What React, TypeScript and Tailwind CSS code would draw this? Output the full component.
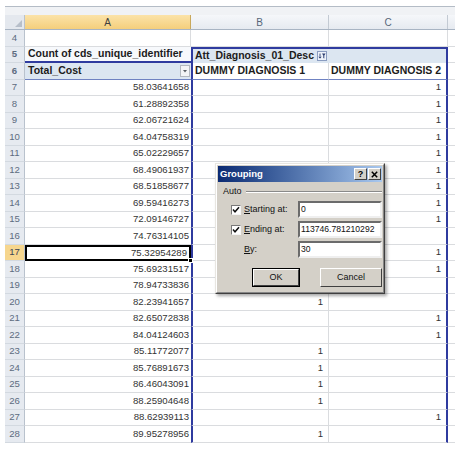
import React from 'react';

type DataRow = { n: number; a: string; b?: string; c?: string };

const dataRows: DataRow[] = [
  { n: 7, a: '58.03641658', c: '1' },
  { n: 8, a: '61.28892358', c: '1' },
  { n: 9, a: '62.06721624', c: '1' },
  { n: 10, a: '64.04758319', c: '1' },
  { n: 11, a: '65.02229657', c: '1' },
  { n: 12, a: '68.49061937', c: '1' },
  { n: 13, a: '68.51858677', c: '1' },
  { n: 14, a: '69.59416273', c: '1' },
  { n: 15, a: '72.09146727', c: '1' },
  { n: 16, a: '74.76314105' },
  { n: 17, a: '75.32954289', c: '1' },
  { n: 18, a: '75.69231517', c: '1' },
  { n: 19, a: '78.94733836' },
  { n: 20, a: '82.23941657', b: '1' },
  { n: 21, a: '82.65072838', c: '1' },
  { n: 22, a: '84.04124603', c: '1' },
  { n: 23, a: '85.11772077', b: '1' },
  { n: 24, a: '85.76891673', b: '1' },
  { n: 25, a: '86.46043091', b: '1' },
  { n: 26, a: '88.25904648', b: '1' },
  { n: 27, a: '88.62939113', c: '1' },
  { n: 28, a: '89.95278956', b: '1' },
];

const RowNum: React.FC<{ n: number; active?: boolean }> = ({ n, active }) => (
  <div
    className={`w-[20px] shrink-0 flex items-center justify-center border-r border-b border-r-[#b9c2cd] border-b-[#d3d9e0] text-[9.6px] ${
      active ? 'bg-[#f6d68e] text-[#3d4656]' : 'bg-[#e6eaf0] text-[#5d6c80]'
    }`}
  >
    {n}
  </div>
);

const FilterIcon = () => (
  <svg width="10" height="10" viewBox="0 0 10 10" className="shrink-0">
    <rect x="0.5" y="0.5" width="9" height="9" fill="#eef3fa" stroke="#8a9cc0" />
    <path d="M3 2.5v4.5M1.8 5.8L3 7.2L4.2 5.8" stroke="#2c3e70" strokeWidth="0.9" fill="none" />
    <path d="M5 2.6h3.6L7.3 4.6v3L6.3 7V4.6z" fill="#2c3e70" />
  </svg>
);

const DropIcon = () => (
  <svg width="10" height="12" viewBox="0 0 10 12" className="shrink-0">
    <rect x="0.5" y="0.5" width="9" height="11" fill="#f3f4f6" stroke="#b3b8bf" />
    <path d="M3 5h4L5 7.5z" fill="#5a5f66" />
  </svg>
);

const Check = () => (
  <div className="w-[10px] h-[10px] bg-white border border-t-[#7a7a7a] border-l-[#7a7a7a] border-r-[#f4f4f4] border-b-[#f4f4f4] flex items-center justify-center shrink-0">
    <svg width="8" height="8" viewBox="0 0 8 8">
      <path d="M1 3.6L3 5.8L7 1.2" stroke="#111" strokeWidth="1.5" fill="none" />
    </svg>
  </div>
);

const Field: React.FC<{ value: string }> = ({ value }) => (
  <div className="w-[84px] shrink-0 h-[17px] bg-white border-2 border-t-[#6b6b6b] border-l-[#6b6b6b] border-r-[#efefef] border-b-[#efefef] flex items-center pl-[1px] text-[8.6px] text-[#111] overflow-hidden whitespace-nowrap">
    {value}
  </div>
);

const GroupingDialog = () => (
  <div className="absolute left-[215px] top-[163px] w-[170px] h-[131px] bg-[#d4d0c8] border border-t-[#e8e6e1] border-l-[#e8e6e1] border-r-[#3f3f3f] border-b-[#3f3f3f] shadow-[2px_2px_3px_rgba(0,0,0,0.35)]">
    <div className="h-full border border-t-white border-l-white border-r-[#868686] border-b-[#868686] px-[1px] pt-[1px] flex flex-col">
      <div className="h-[16px] bg-linear-to-r from-[#0b2a72] to-[#a9c8ee] flex items-center justify-between pl-[2px] pr-[1px]">
        <span className="text-white font-bold text-[9.5px]">Grouping</span>
        <div className="flex gap-[1px]">
          <div className="w-[13px] h-[12px] bg-[#d4d0c8] border border-t-white border-l-white border-r-[#404040] border-b-[#404040] flex items-center justify-center text-[9px] font-bold leading-none text-black">?</div>
          <div className="w-[13px] h-[12px] bg-[#d4d0c8] border border-t-white border-l-white border-r-[#404040] border-b-[#404040] flex items-center justify-center">
            <svg width="7" height="7" viewBox="0 0 7 7">
              <path d="M0.8 0.8L6.2 6.2M6.2 0.8L0.8 6.2" stroke="#000" strokeWidth="1.5" />
            </svg>
          </div>
        </div>
      </div>
      <div className="pl-[5px] flex flex-col text-[9px] text-[#111]">
        <div className="mt-[4px] h-[12px] flex items-center gap-[4px]">
          <span>Auto</span>
          <div className="flex-1 h-[2px] border-t border-t-[#8a8a8a] border-b border-b-white" />
        </div>
        <div className="mt-[3px] flex flex-col gap-[3px] pl-[8px]">
          <div className="h-[17px] flex items-center">
            <Check />
            <span className="ml-[3px] w-[54px] shrink-0"><u>S</u>tarting at:</span>
            <Field value="0" />
          </div>
          <div className="h-[17px] flex items-center">
            <Check />
            <span className="ml-[3px] w-[54px] shrink-0"><u>E</u>nding at:</span>
            <Field value="113746.781210292" />
          </div>
          <div className="h-[17px] flex items-center">
            <span className="ml-[13px] w-[54px] shrink-0"><u>B</u>y:</span>
            <Field value="30" />
          </div>
        </div>
        <div className="mt-[10px] flex pl-[29px] gap-[20px]">
          <div className="w-[48px] h-[19px] border border-black">
            <div className="h-full bg-[#d4d0c8] border border-t-white border-l-white border-r-[#404040] border-b-[#404040] flex items-center justify-center">OK</div>
          </div>
          <div className="w-[62px] h-[19px] bg-[#d4d0c8] border border-t-white border-l-white border-r-[#404040] border-b-[#404040] flex items-center justify-center">Cancel</div>
        </div>
      </div>
    </div>
  </div>
);

const App: React.FC = () => {
  const blue = 'border-[#2f3b9f]';
  return (
    <div className="relative w-[464px] h-[450px] bg-white overflow-hidden font-['Liberation_Sans',Arial,sans-serif]">
      <div className="ml-[5px] mt-[6px] w-[450px]">
        {/* strip above the column headers */}
        <div className="h-[9px] border-t border-t-[#b4bcc6] bg-[#f0f2f5]" />

        {/* column headers */}
        <div className="flex h-[15px] border-b border-b-[#a8b4c3] text-[10px]">
          <div className="w-[20px] bg-[#e4e8ee] border-r border-r-[#b9c2cd] flex items-end justify-end p-[2px]">
            <svg width="7" height="7" viewBox="0 0 7 7">
              <path d="M7 0V7H0z" fill="#b7bfca" />
            </svg>
          </div>
          <div className="w-[166px] bg-linear-to-b from-[#fbe3a8] to-[#f4cf7c] border-r border-r-[#c9a85b] flex items-center justify-center text-[#3e3e3e]">A</div>
          <div className="w-[138px] bg-linear-to-b from-[#f5f7fa] to-[#e6eaf0] border-r border-r-[#c3cad3] flex items-center justify-center text-[#56657a]">B</div>
          <div className="w-[119px] bg-linear-to-b from-[#f5f7fa] to-[#e6eaf0] border-r border-r-[#c3cad3] flex items-center justify-center text-[#56657a]">C</div>
          <div className="w-[7px] bg-linear-to-b from-[#f5f7fa] to-[#e6eaf0]" />
        </div>

        {/* row 4 */}
        <div className="flex h-[16.5px]">
          <RowNum n={4} />
          <div className="w-[166px] border-r border-b border-[#dadcdf]" />
          <div className="w-[138px] border-r border-b border-[#dadcdf]" />
          <div className="w-[119px] border-r border-b border-[#dadcdf]" />
          <div className="w-[7px] border-b border-[#dadcdf]" />
        </div>

        {/* row 5 */}
        <div className="flex h-[16.5px] text-[10.5px] font-bold text-[#1c1c1c]">
          <RowNum n={5} />
          <div className={`w-[166px] border-b-2 ${blue} bg-[#f7f9fc] flex items-center pl-[3px] whitespace-nowrap overflow-hidden`}>
            Count of cds_unique_identifier
          </div>
          <div className={`w-[138px] border-t-2 border-l-2 ${blue} bg-[#dce6f1] flex items-center justify-between pl-[2px] pr-[2px] whitespace-nowrap`}>
            <span>Att_Diagnosis_01_Desc</span>
            <FilterIcon />
          </div>
          <div className={`w-[119px] border-t-2 border-r-2 ${blue} bg-[#dce6f1]`} />
          <div className="w-[7px] border-b border-[#dadcdf]" />
        </div>

        {/* row 6 */}
        <div className="flex h-[16.5px] text-[10.5px] font-bold text-[#1c1c1c]">
          <RowNum n={6} />
          <div className="w-[166px] border-b border-b-[#6f82c2] bg-[#dce6f1] flex items-center justify-between pl-[3px] pr-[1px]">
            <span>Total_Cost</span>
            <DropIcon />
          </div>
          <div className={`w-[138px] border-l-2 ${blue} border-b border-b-[#6f82c2] border-r border-r-[#dadcdf] bg-white flex items-center pl-[2px] whitespace-nowrap overflow-hidden`}>
            DUMMY DIAGNOSIS 1
          </div>
          <div className={`w-[119px] border-r-2 ${blue} border-b border-b-[#6f82c2] bg-white flex items-center pl-[2px] whitespace-nowrap overflow-hidden`}>
            DUMMY DIAGNOSIS 2
          </div>
          <div className="w-[7px] border-b border-[#dadcdf]" />
        </div>

        {/* data rows */}
        {dataRows.map((r) => {
          const active = r.n === 17;
          return (
            <div key={r.n} className="flex h-[16.5px] text-[9.6px] text-[#333]">
              <RowNum n={r.n} active={active} />
              <div
                className={`relative w-[166px] flex items-center justify-end pr-[2px] ${
                  active ? 'border-2 border-black' : 'border-b border-b-[#dadcdf]'
                }`}
              >
                {r.a}
                {active && (
                  <div className="absolute -right-[4px] -bottom-[4px] w-[5px] h-[5px] bg-black border border-white" />
                )}
              </div>
              <div className={`w-[138px] border-l-2 ${blue} border-b border-b-[#dadcdf] border-r border-r-[#dadcdf] flex items-center justify-end pr-[5px]`}>
                {r.b}
              </div>
              <div className={`w-[119px] border-r-2 ${blue} border-b border-b-[#dadcdf] flex items-center justify-end pr-[5px]`}>
                {r.c}
              </div>
              <div className="w-[7px] border-b border-[#dadcdf]" />
            </div>
          );
        })}
      </div>

      <GroupingDialog />
    </div>
  );
};

export default App;
